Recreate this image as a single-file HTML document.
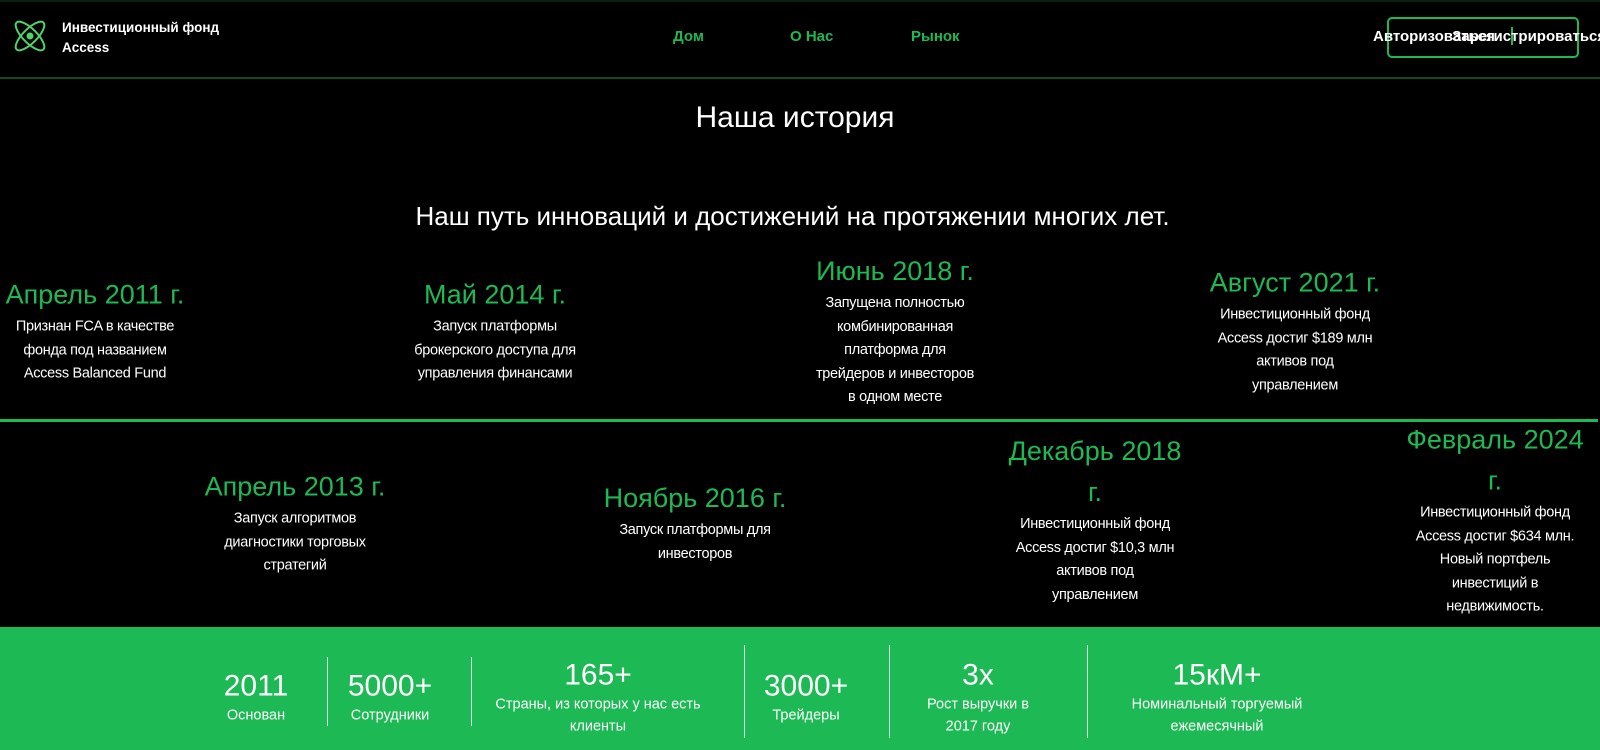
<!DOCTYPE html>
<html><head><meta charset="utf-8">
<style>
*{margin:0;padding:0;box-sizing:border-box}
body{width:1600px;height:750px;background:#000;color:#fff;font-family:"Liberation Sans",sans-serif;position:relative;overflow:hidden}
.abs{position:absolute}
.hdr{position:absolute;left:0;top:0;width:1600px;height:79px;border-bottom:2px solid #0f4a22;border-top:2px solid #07200f}
.nav{position:absolute;top:28px;color:#1db954;font-weight:bold;font-size:15px}
.t{position:absolute;width:200px;text-align:center;transform:translateY(-50%)}
.t h3{font-weight:normal;color:#1db954;font-size:27px;line-height:41px;padding:0 8px}
.t p{font-size:14.5px;line-height:23.5px;padding:0 8px;letter-spacing:-0.3px}
.nw{white-space:nowrap;padding:0 !important}
.stat{position:absolute;text-align:center;transform:translate(-50%,-50%)}
.stat b{display:block;font-weight:normal;font-size:30px;line-height:37px}
.stat span{display:block;font-size:14.5px;line-height:22px}
.dv{position:absolute;width:1px;background:#d9f5e2}
</style></head><body>
<div class="hdr"></div>
<svg class="abs" style="left:9px;top:15px" width="42" height="42" viewBox="0 0 42 42" fill="none" stroke="#4fd36a" stroke-width="2">
<ellipse cx="21" cy="21" rx="19" ry="7" transform="rotate(45 21 21)"/>
<ellipse cx="21" cy="21" rx="19" ry="7" transform="rotate(-45 21 21)"/>
<circle cx="21" cy="21" r="3.5" fill="#4fd36a" stroke="none"/>
</svg>
<div class="abs" style="left:62px;top:18px;font-size:13.5px;font-weight:bold;line-height:20px">Инвестиционный фонд<br>Access</div>
<div class="nav" style="left:673px">Дом</div>
<div class="nav" style="left:790px">О Нас</div>
<div class="nav" style="left:911px">Рынок</div>
<div class="abs" style="left:1387px;top:17px;width:192px;height:41px;border:2px solid #1db954;border-radius:5px"></div>
<div class="abs" style="left:1511px;top:27px;width:2px;height:18px;background:#1db954"></div>
<div class="abs" style="left:1373px;top:28px;font-size:15px;font-weight:bold;white-space:nowrap">Авторизоваться</div>
<div class="abs" style="left:1452px;top:28px;font-size:15px;font-weight:bold;white-space:nowrap">Зарегистрироваться</div>

<div class="abs" style="left:0;width:1590px;top:101px;text-align:center;font-size:30px">Наша история</div>
<div class="abs" style="left:0;width:1585px;top:201px;text-align:center;font-size:26px">Наш путь инноваций и достижений на протяжении многих лет.</div>

<div class="t" style="left:-5px;top:330px"><h3>Апрель 2011 г.</h3><p>Признан FCA в качестве фонда под названием Access Balanced Fund</p></div>
<div class="t" style="left:395px;top:330px"><h3>Май 2014 г.</h3><p>Запуск платформы брокерского доступа для управления финансами</p></div>
<div class="t" style="left:795px;top:330px"><h3>Июнь 2018 г.</h3><p style="padding:0 18px">Запущена полностью комбинированная платформа для трейдеров и инвесторов в одном месте</p></div>
<div class="t" style="left:1195px;top:330px"><h3>Август 2021 г.</h3><p style="padding:0 20px">Инвестиционный фонд Access достиг $189 млн активов под управлением</p></div>

<div class="abs" style="left:0;top:419px;width:1598px;height:3px;background:#1db954"></div>

<div class="t" style="left:195px;top:522px"><h3>Апрель 2013 г.</h3><p style="padding:0 22px">Запуск алгоритмов диагностики торговых стратегий</p></div>
<div class="t" style="left:595px;top:522px"><h3>Ноябрь 2016 г.</h3><p style="padding:0 12px">Запуск платформы для инвесторов</p></div>
<div class="t" style="left:995px;top:519px"><h3 class="nw">Декабрь 2018<br>г.</h3><p class="nw">Инвестиционный фонд<br>Access достиг $10,3 млн<br>активов под<br>управлением</p></div>
<div class="t" style="left:1395px;top:519px"><h3 class="nw">Февраль 2024<br>г.</h3><p class="nw">Инвестиционный фонд<br>Access достиг $634 млн.<br>Новый портфель<br>инвестиций в<br>недвижимость.</p></div>

<div class="abs" style="left:0;top:627px;width:1600px;height:123px;background:#1db954"></div>
<div class="stat" style="left:256px;top:697px"><b>2011</b><span>Основан</span></div>
<div class="dv" style="left:327px;top:657px;height:69px"></div>
<div class="stat" style="left:390px;top:697px"><b>5000+</b><span>Сотрудники</span></div>
<div class="dv" style="left:471px;top:657px;height:69px"></div>
<div class="stat" style="left:598px;top:697px;width:225px"><b>165+</b><span>Страны, из которых у нас есть клиенты</span></div>
<div class="dv" style="left:744px;top:645px;height:93px"></div>
<div class="stat" style="left:806px;top:697px"><b>3000+</b><span>Трейдеры</span></div>
<div class="dv" style="left:889px;top:645px;height:93px"></div>
<div class="stat" style="left:978px;top:697px;width:130px"><b>3x</b><span>Рост выручки в 2017 году</span></div>
<div class="dv" style="left:1087px;top:645px;height:93px"></div>
<div class="stat" style="left:1217px;top:697px;width:200px"><b>15кМ+</b><span>Номинальный торгуемый ежемесячный</span></div>
</body></html>
